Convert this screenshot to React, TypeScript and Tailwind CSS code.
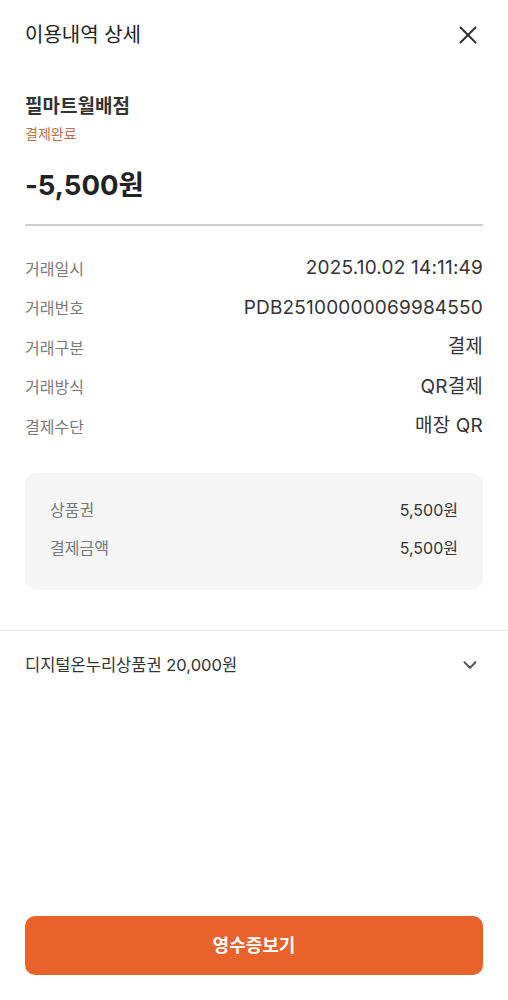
import { ChevronDown, X } from "lucide-react"

const details = [
  { label: "거래일시", value: "2025.10.02 14:11:49" },
  { label: "거래번호", value: "PDB25100000069984550" },
  { label: "거래구분", value: "결제" },
  { label: "거래방식", value: "QR결제" },
  { label: "결제수단", value: "매장 QR" },
]

const amounts = [
  { label: "상품권", value: "5,500원" },
  { label: "결제금액", value: "5,500원" },
]

export default function App() {
  return (
    <div
      className="flex min-h-[1000px] w-full flex-col bg-white text-[#222]"
      style={{ fontFamily: 'Inter, "Noto Sans CJK KR", "Noto Sans", sans-serif' }}
    >
      <header className="flex h-[70px] items-center justify-between px-[25px]">
        <h1 className="text-[20px] font-normal text-[#222]">이용내역 상세</h1>
        <X className="h-[30px] w-[30px] text-[#333]" strokeWidth={1.6} />
      </header>

      <section className="px-[25px] pt-[24px]">
        <div className="text-[19px] leading-[26px] font-bold text-[#333]">필마트월배점</div>
        <div className="mt-[3px] text-[14px] leading-[22px] text-[#c0703f]">결제완료</div>
        <div className="mt-[22px] text-[27.5px] leading-[36px] font-bold text-[#222]">-5,500원</div>
        <div className="mt-[21px] h-[2px] bg-[#cfcfcf]" />
      </section>

      <section className="flex flex-col gap-[12.5px] px-[25px] pt-[29px]">
        {details.map((d) => (
          <div key={d.label} className="flex h-[27px] items-center justify-between">
            <span className="text-[16px] text-[#7a7a7a]">{d.label}</span>
            <span className="text-[19px] tracking-[0.01em] text-[#333]">{d.value}</span>
          </div>
        ))}
      </section>

      <section className="px-[25px] pt-[32.5px]">
        <div className="flex flex-col gap-[12px] rounded-[12px] bg-[#f5f5f5] px-[25px] pt-[24px] pb-[29px]">
          {amounts.map((a) => (
            <div key={a.label} className="flex h-[26px] items-center justify-between">
              <span className="text-[16px] text-[#777]">{a.label}</span>
              <span className="text-[16px] text-[#333]">{a.value}</span>
            </div>
          ))}
        </div>
      </section>

      <div className="mt-[40px] h-px bg-[#ebebeb]" />

      <div className="flex h-[66px] items-center justify-between px-[25px] pt-[3px]">
        <span className="text-[16.5px] text-[#333]">디지털온누리상품권 20,000원</span>
        <ChevronDown className="mr-[2px] h-[22px] w-[22px] text-[#555]" strokeWidth={2.2} />
      </div>

      <div className="flex-1" />

      <div className="px-[25px] pb-[25px]">
        <button className="flex h-[59px] w-full items-center justify-center rounded-[10px] bg-[#e8622c] text-[18px] font-bold text-white">
          영수증보기
        </button>
      </div>
    </div>
  )
}
